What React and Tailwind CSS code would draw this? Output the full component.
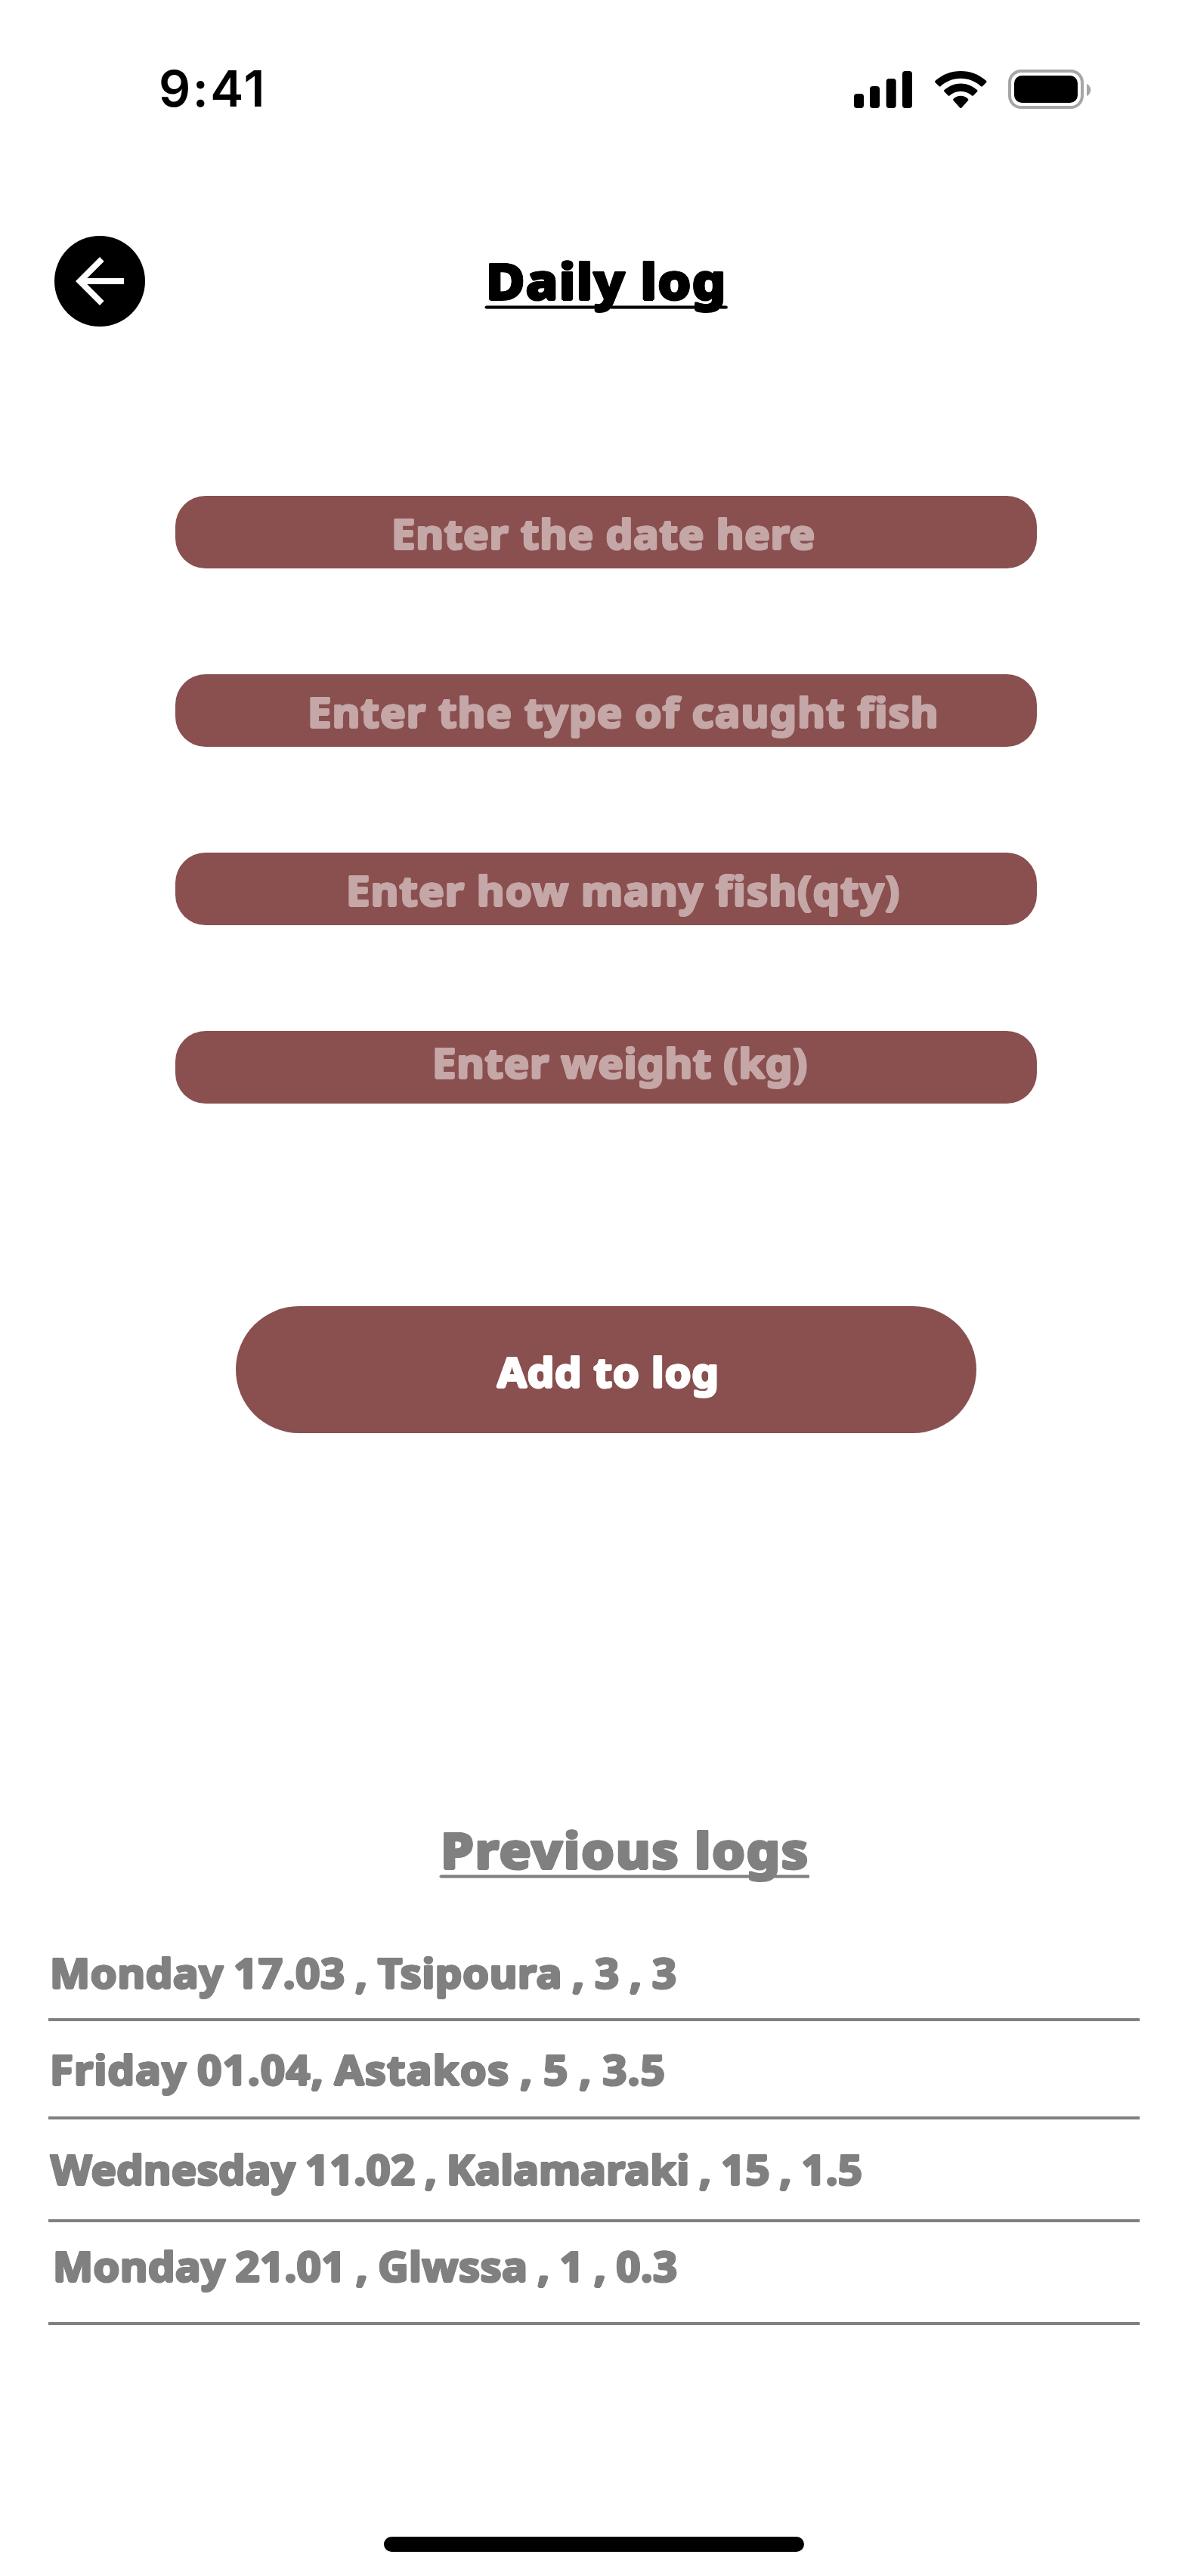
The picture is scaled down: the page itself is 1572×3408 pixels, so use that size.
import React from 'react';

const ROUND =
  'whitespace-pre origin-left font-["Noto_Sans",sans-serif] [text-shadow:1.5px_0_0,-1.5px_0_0,0_1.5px_0,0_-1.5px_0,1.1px_1.1px_0,-1.1px_1.1px_0,1.1px_-1.1px_0,-1.1px_-1.1px_0]';
const TITLE = 'scale-x-[1.065] text-[66px] font-extrabold leading-[100px] underline decoration-1 underline-offset-[10px]';
const BODY = 'scale-x-[1.042] text-[54px] font-bold';

const fields = [
  { text: 'Enter the date here', pos: 'pl-[286px] pt-[1px]', ls: 'tracking-[0.82px]' },
  { text: 'Enter the type of caught fish', pos: 'pl-[175px] pt-[1px]', ls: 'tracking-[1.15px]' },
  { text: 'Enter how many fish(qty)', pos: 'pl-[226px] pt-[1px]', ls: 'tracking-[1.14px]' },
  { text: 'Enter weight (kg)', pos: 'pl-[340px]', ls: 'tracking-[0.72px] -mt-[7px]' },
];

const logs = [
  { text: 'Monday 17.03 , Tsipoura , 3 , 3', box: 'h-[128px] pt-[31px] pl-[2px]', ls: 'tracking-[0.6px]' },
  { text: 'Friday 01.04, Astakos , 5 , 3.5', box: 'h-[130px] pt-[31px] pl-[2px]', ls: 'tracking-[1.14px]' },
  { text: 'Wednesday 11.02 , Kalamaraki , 15 , 1.5', box: 'h-[136px] pt-[33px] pl-[3px]', ls: 'tracking-[0.18px]' },
  { text: 'Monday 21.01 , Glwssa , 1 , 0.3', box: 'h-[136px] pt-[25px] pl-[6px]', ls: 'tracking-[0.36px]' },
];

function StatusBar() {
  return (
    <div className="flex h-[236px] items-start pl-[210px] pr-[127px] pt-[84px]">
      <span className='font-["Inter",sans-serif] text-[66px] font-semibold leading-[66px] tracking-[2.5px]'>9:41</span>
      <div className="ml-auto flex items-start pt-2">
        <svg className="mt-[2px] h-[49px] w-[77px]" viewBox="0 0 77 49">
          <rect x="0" y="30" width="13" height="19" rx="4" />
          <rect x="21" y="20" width="13" height="29" rx="4" />
          <rect x="42.7" y="10" width="13" height="39" rx="4" />
          <rect x="64" y="0" width="13" height="49" rx="4" />
        </svg>
        <svg className="ml-[30px] mt-[2px] h-[49.33px] w-[68.57px]" viewBox="0 0 17.142 12.333">
          <path d="M8.5713 2.46628C11.0584 2.46639 13.4504 3.38847 15.2529 5.04195C15.3887 5.16963 15.6056 5.16802 15.7393 5.03834L17.0368 3.77487C17.1045 3.70911 17.1422 3.62004 17.1417 3.52735C17.1411 3.43467 17.1023 3.34603 17.0338 3.28104C12.3028 -1.09368 4.83907 -1.09368 0.108056 3.28104C0.04 3.346 0 3.4346 0 3.52728C0 3.61996 0.0370483 3.70906 0.104689 3.77487L1.40255 5.03834C1.53615 5.16822 1.75327 5.16983 1.88893 5.04195C3.69167 3.38836 6.08395 2.46628 8.5713 2.46628ZM8.56795 6.68656C9.92527 6.68647 11.2341 7.19821 12.2403 8.12234C12.3763 8.2535 12.5907 8.25065 12.7234 8.11594L14.0106 6.79682C14.0784 6.72764 14.116 6.6338 14.115 6.53629C14.114 6.43877 14.0746 6.34576 14.0054 6.27806C10.9416 3.38918 6.19688 3.38918 3.13305 6.27806C3.06384 6.34576 3.02435 6.43881 3.02345 6.53636C3.02254 6.6339 3.06028 6.72769 3.12822 6.79682L4.41513 8.11594C4.54778 8.25065 4.76215 8.2535 4.89823 8.12234C5.90368 7.19883 7.21152 6.68713 8.56795 6.68656ZM11.0924 9.48011C11.0943 9.58546 11.0572 9.68703 10.9899 9.76084L8.81327 12.2156C8.74946 12.2877 8.66247 12.3283 8.5717 12.3283C8.48093 12.3283 8.39394 12.2877 8.33013 12.2156L6.15315 9.76084C6.0859 9.68697 6.04892 9.58537 6.05093 9.48002C6.05294 9.37467 6.09377 9.27484 6.16378 9.20411C7.55394 7.88651 9.58946 7.88651 10.9796 9.20411C11.0496 9.27489 11.0904 9.37476 11.0924 9.48011Z" />
        </svg>
        <svg className="ml-[28px] h-[52px] w-[111px]" viewBox="0 0 111 52">
          <rect x="2" y="2" width="96" height="48" rx="15.2" fill="none" stroke="#a6a6a6" strokeWidth="4" />
          <path d="M104 19v16c3.2-1.35 5.3-4.5 5.3-8s-2.1-6.65-5.3-8Z" fill="#a6a6a6" />
          <rect x="8" y="8" width="84" height="36" rx="10" />
        </svg>
      </div>
    </div>
  );
}

export default function App() {
  return (
    <div className="flex h-[3408px] w-[1572px] flex-col overflow-hidden bg-white text-black">
      <StatusBar />

      <header className="flex h-[272px] items-start pl-[72px] pt-[76px]">
        <button aria-label="Back" className="flex size-[120px] items-center justify-center rounded-full bg-black">
          <svg className="size-[96px]" viewBox="0 0 24 24" fill="#fff">
            <path d="M20 11H7.83l5.59-5.59L12 4l-8 8 8 8 1.41-1.41L7.83 13H20v-2z" />
          </svg>
        </button>
        <h1 className={`${ROUND} ${TITLE} ml-[451px] mt-[8px] tracking-[1.05px]`}>Daily log</h1>
      </header>

      <main className="flex flex-col">
        <div className="ml-[232px] mt-[148px] flex w-[1140px] flex-col gap-[140px]">
          {fields.map((f) => (
            <div key={f.text} className={`${f.pos} flex h-[96px] rounded-[40px] bg-[#8a4f4f] text-[#c5a7a7]`}>
              <span className={`${ROUND} ${BODY} ${f.ls} leading-[96px]`}>{f.text}</span>
            </div>
          ))}
        </div>

        <button className="ml-[312px] mt-[268px] flex h-[168px] w-[980px] items-start rounded-full bg-[#8a4f4f] pl-[346px] pt-[22px] text-white">
          <span className={`${ROUND} ${BODY} leading-[128px] tracking-[0.7px]`}>Add to log</span>
        </button>

        <section className="ml-[64px] mt-[500px] w-[1444px] text-[#808080]">
          <h2 className="flex h-[150px] pl-[519px]">
            <span className={`${ROUND} ${TITLE} tracking-[1.25px]`}>Previous logs</span>
          </h2>
          <ul>
            {logs.map((l) => (
              <li key={l.text} className={`${l.box} border-b-4 border-[#808080]`}>
                <span className={`${ROUND} ${BODY} ${l.ls} block w-fit leading-[64px] [word-spacing:-2px]`}>{l.text}</span>
              </li>
            ))}
          </ul>
        </section>
      </main>

      <div className="mb-[32px] ml-[508px] mt-auto h-[20px] w-[556px] rounded-full bg-black" />
    </div>
  );
}
